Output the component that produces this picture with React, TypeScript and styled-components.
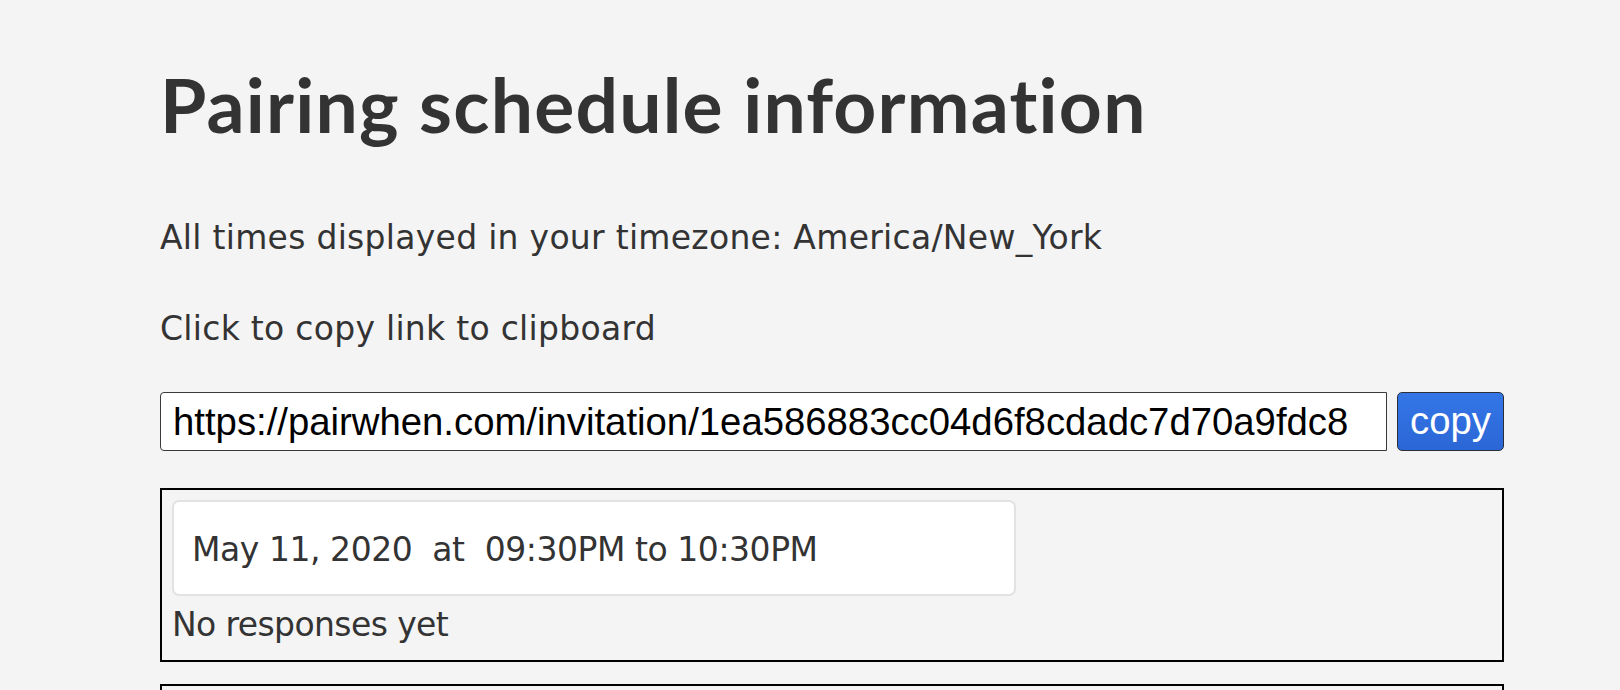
import React from "react";
import styled, { createGlobalStyle } from "styled-components";

const GlobalStyle = createGlobalStyle`
  html, body {
    margin: 0;
    padding: 0;
    background: #f4f4f4;
  }
  body {
    font-family: "DejaVu Sans", "Liberation Sans", sans-serif;
    color: #333333;
  }
  * { box-sizing: border-box; }
`;

const Page = styled.main`
  width: 1344px;
  margin-left: 160px;
  padding-top: 58px;
  display: flex;
  flex-direction: column;
`;

const Title = styled.h1`
  margin: 0;
  font-family: "Lato", "DejaVu Sans", sans-serif;
  font-weight: 700;
  font-size: 75px;
  line-height: 92px;
  letter-spacing: 1.2px;
  color: #333333;
`;

const Text = styled.p<{ $top: number }>`
  margin: ${(p) => p.$top}px 0 0;
  font-size: 33px;
  line-height: 40px;
  letter-spacing: 0.28px;
  color: #333333;
  white-space: pre;
`;

const LinkRow = styled.div`
  margin-top: 43px;
  display: flex;
  gap: 10px;
  height: 59px;
`;

const LinkInput = styled.input`
  flex: 1;
  min-width: 0;
  height: 100%;
  margin: 0;
  padding: 0 12px;
  border: 1px solid #3a3a3a;
  border-radius: 4px 0 0 4px;
  background: #ffffff;
  font-family: "Liberation Sans", Arial, sans-serif;
  font-size: 38.3px;
  color: #000000;
  outline: none;
`;

const CopyButton = styled.button`
  width: 107px;
  height: 100%;
  margin: 0;
  padding: 0;
  border: 1px solid #2b2f3a;
  border-radius: 5px;
  background: linear-gradient(#3476e6, #2b66d6);
  color: #ffffff;
  font-family: "Liberation Sans", Arial, sans-serif;
  font-size: 38.3px;
  line-height: 1;
  cursor: pointer;
`;

const Slot = styled.section<{ $top: number }>`
  margin-top: ${(p) => p.$top}px;
  min-height: 174px;
  border: 2px solid #000000;
  padding: 10px 10px 15px;
  display: flex;
  flex-direction: column;
`;

const TimeCard = styled.div`
  width: 844px;
  height: 96px;
  padding: 28px 18px 24px;
  background: #ffffff;
  border: 2px solid #e2e2e2;
  border-radius: 7px;
  font-size: 33px;
  line-height: 40px;
  letter-spacing: -0.45px;
  white-space: pre;
  color: #333333;
`;

const Responses = styled.div`
  margin-top: 9px;
  font-size: 33px;
  line-height: 40px;
  letter-spacing: -0.6px;
  color: #333333;
`;

type SlotData = { date: string; from: string; to: string } | null;

// The second slot continues below the visible fold.
const slots: SlotData[] = [{ date: "May 11, 2020", from: "09:30PM", to: "10:30PM" }, null];

export default function App() {
  const url = "https://pairwhen.com/invitation/1ea586883cc04d6f8cdadc7d70a9fdc8";
  return (
    <>
      <GlobalStyle />
      <Page>
        <Title>Pairing schedule information</Title>
        <Text $top={68}>All times displayed in your timezone: America/New_York</Text>
        <Text $top={51}>Click to copy link to clipboard</Text>
        <LinkRow>
          <LinkInput readOnly value={url} />
          <CopyButton type="button">copy</CopyButton>
        </LinkRow>
        {slots.map((s, i) => (
          <Slot key={i} $top={i === 0 ? 37 : 21.5}>
            {s && (
              <>
                <TimeCard>{`${s.date}  at  ${s.from} to ${s.to}`}</TimeCard>
                <Responses>No responses yet</Responses>
              </>
            )}
          </Slot>
        ))}
      </Page>
    </>
  );
}
